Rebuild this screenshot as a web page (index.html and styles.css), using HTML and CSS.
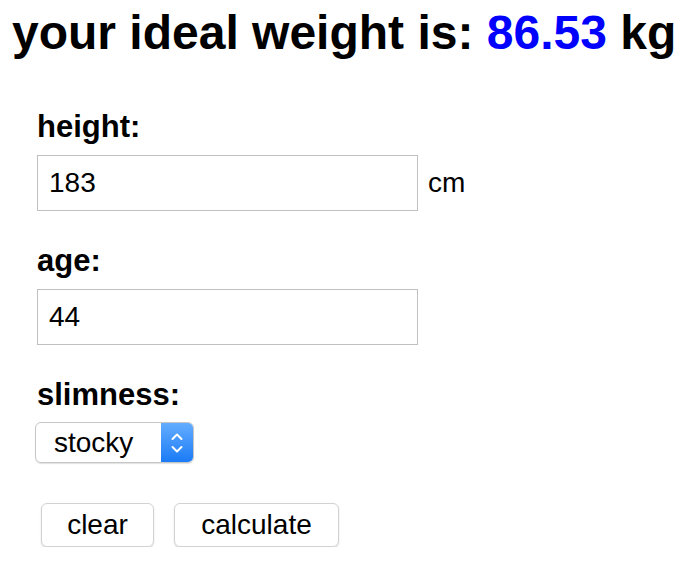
FILE: index.html
```html
<!DOCTYPE html>
<html>
<head>
<meta charset="utf-8">
<link rel="stylesheet" href="styles.css">
</head>
<body>
<h1 class="title">your ideal weight is: <span class="result">86.53</span> kg</h1>
<form class="form">
  <div class="field">
    <label class="label">height:</label>
    <div class="row">
      <div class="input">183</div>
      <span class="unit">cm</span>
    </div>
  </div>
  <div class="field">
    <label class="label">age:</label>
    <div class="row">
      <div class="input">44</div>
    </div>
  </div>
  <div class="field field-last">
    <label class="label label-tight">slimness:</label>
    <div class="select">
      <span class="select-text">stocky</span>
      <span class="select-btn">
        <svg width="16" height="28" viewBox="0 0 16 28"><path d="M3.5 10 L8 5.5 L12.5 10 M3.5 18 L8 22.5 L12.5 18" fill="none" stroke="#fff" stroke-width="2" stroke-linecap="round" stroke-linejoin="round"/></svg>
      </span>
    </div>
  </div>
  <div class="buttons">
    <div class="btn btn-clear">clear</div>
    <div class="btn btn-calc">calculate</div>
  </div>
</form>
</body>
</html>
```
FILE: styles.css
```css
html, body { margin: 0; padding: 0; background: #fff; }
body { font-family: "Liberation Sans", Arial, sans-serif; color: #000; }
.title {
  margin: 0;
  padding: 5px 0 0 12px;
  font-size: 48px;
  font-weight: bold;
  line-height: 56px;
  white-space: nowrap;
}
.result { color: #0000ff; }
.form { padding: 48px 0 0 37px; display: flex; flex-direction: column; }
.field { display: flex; flex-direction: column; margin-bottom: 32px; }
.field-last { margin-bottom: 40px; }
.label { font-size: 31px; font-weight: bold; line-height: 36px; margin-bottom: 10px; }
.label-tight { margin-bottom: 9px; }
.row { display: flex; align-items: center; }
.input {
  box-sizing: border-box;
  width: 381px; height: 56px;
  border: 1px solid #c0c0c0;
  font-size: 28px;
  padding-left: 11px;
  display: flex; align-items: center;
}
.unit { font-size: 28px; margin-left: 10px; }
.select {
  box-sizing: border-box;
  margin-left: -2px;
  width: 159px; height: 41px;
  border: 1px solid #c6c6c6;
  border-radius: 6px;
  display: flex; align-items: stretch;
  overflow: hidden;
  box-shadow: 0 1px 1px rgba(0,0,0,0.12);
}
.select-text { flex: 1; font-size: 28px; display: flex; align-items: center; padding-left: 18px; }
.select-btn {
  width: 32px;
  background: linear-gradient(#63adff, #1b7bf6);
  display: flex; align-items: center; justify-content: center;
}
.buttons { display: flex; gap: 20px; margin-left: 4px; }
.btn {
  box-sizing: border-box;
  height: 44px;
  border: 1px solid #d2d2d2;
  border-radius: 6px;
  box-shadow: 0 1px 1.5px rgba(0,0,0,0.18);
  font-size: 28px;
  display: flex; align-items: center; justify-content: center;
}
.btn-clear { width: 113px; }
.btn-calc { width: 165px; }
```
